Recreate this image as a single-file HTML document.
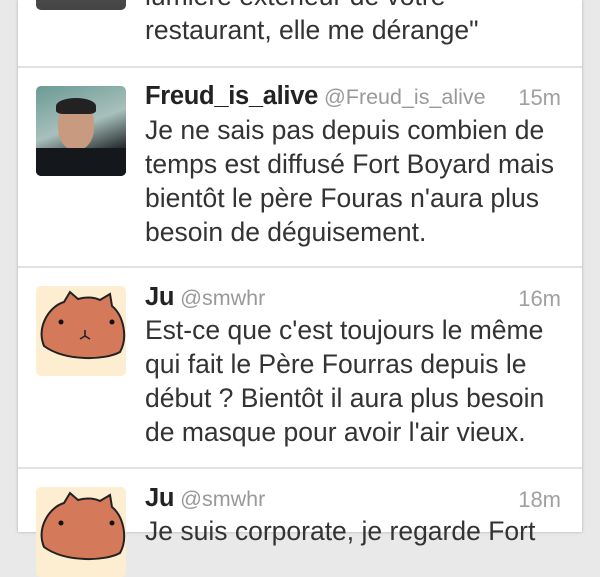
<!DOCTYPE html>
<html><head><meta charset="utf-8"><style>
body{margin:0;width:600px;height:532px;overflow:hidden;background:#e9e9e9;font-family:"Liberation Sans",Arial,sans-serif;position:relative}
.card{position:absolute;left:18px;top:0;width:564px;height:532px;background:#fff;box-shadow:0 0 3px rgba(0,0,0,.25)}
.sep{position:absolute;left:18px;width:564px;height:2px;background:#e2e2e2}
.t{position:absolute;left:145px;font-size:26.5px;line-height:34px;color:#333;white-space:nowrap}
.n{position:absolute;left:145px;font-size:25.5px;color:#222;white-space:nowrap}
.n b{font-weight:bold;letter-spacing:-0.3px}
.n span{color:#999;font-size:21.5px;margin-left:6px}
.tm{position:absolute;right:39px;font-size:22px;color:#a0a0a0}
.av{position:absolute;left:36px;width:90px;height:90px;border-radius:5px;overflow:hidden}
</style></head><body>
<div class="card"></div>
<div class="av" style="top:-80px;background:linear-gradient(#777,#444)"></div>
<div class="t" style="top:-21px">lumière extérieur de votre</div>
<div class="t" style="top:13px">restaurant, elle me dérange"</div>
<div class="sep" style="top:66px"></div>

<div class="av" style="top:86px;background:linear-gradient(160deg,#6a9a94,#a8c0bc 45%,#2a3032 75%,#151a1e)">
<div style="position:absolute;left:22px;top:16px;width:36px;height:48px;border-radius:45%;background:#c89a80"></div>
<div style="position:absolute;left:20px;top:12px;width:40px;height:16px;border-radius:50% 50% 20% 20%;background:#222"></div>
<div style="position:absolute;left:0;top:62px;width:90px;height:30px;background:#14181c"></div>
</div>
<div class="n" style="top:82px"><b>Freud_is_alive</b><span>@Freud_is_alive</span></div>
<div class="tm" style="top:85px">15m</div>
<div class="t" style="top:113px">Je ne sais pas depuis combien de<br>temps est diffusé Fort Boyard mais<br>bientôt le père Fouras n'aura plus<br>besoin de déguisement.</div>
<div class="sep" style="top:266px"></div>

<div class="av" style="top:286px;background:#fdeed2">
<svg width="90" height="90"><path d="M8 60 C0 40 14 20 28 16 L34 6 L42 13 C52 10 60 12 64 14 L74 8 L76 20 C88 30 92 52 84 66 C70 74 30 76 8 60Z" fill="#d4795a" stroke="#222" stroke-width="2"/><circle cx="25" cy="36" r="2.5" fill="#111"/><circle cx="76" cy="36" r="2.5" fill="#111"/><path d="M49 44 L49 50 M44 53 L49 50 L54 53" stroke="#222" stroke-width="1.6" fill="none"/></svg>
</div>
<div class="n" style="top:283px"><b>Ju</b><span>@smwhr</span></div>
<div class="tm" style="top:286px">16m</div>
<div class="t" style="top:313px">Est-ce que c'est toujours le même<br>qui fait le Père Fourras depuis le<br>début ? Bientôt il aura plus besoin<br>de masque pour avoir l'air vieux.</div>
<div class="sep" style="top:467px"></div>

<div class="av" style="top:487px;background:#fdeed2">
<svg width="90" height="90"><path d="M8 60 C0 40 14 20 28 16 L34 6 L42 13 C52 10 60 12 64 14 L74 8 L76 20 C88 30 92 52 84 66 C70 74 30 76 8 60Z" fill="#d4795a" stroke="#222" stroke-width="2"/><circle cx="25" cy="36" r="2.5" fill="#111"/><circle cx="76" cy="36" r="2.5" fill="#111"/></svg>
</div>
<div class="n" style="top:484px"><b>Ju</b><span>@smwhr</span></div>
<div class="tm" style="top:487px">18m</div>
<div class="t" style="top:514px">Je suis corporate, je regarde Fort</div>
</body></html>
